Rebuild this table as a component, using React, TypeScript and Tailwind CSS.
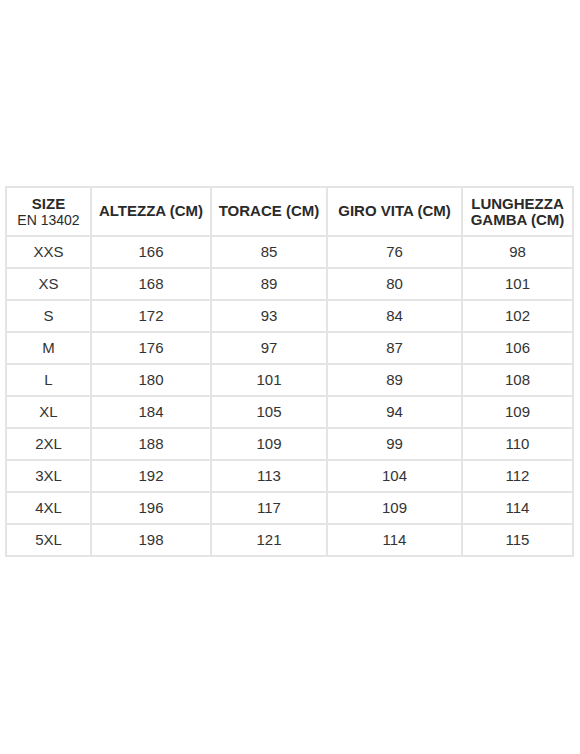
import React from "react";

const rows = [
  ["XXS", "166", "85", "76", "98"],
  ["XS", "168", "89", "80", "101"],
  ["S", "172", "93", "84", "102"],
  ["M", "176", "97", "87", "106"],
  ["L", "180", "101", "89", "108"],
  ["XL", "184", "105", "94", "109"],
  ["2XL", "188", "109", "99", "110"],
  ["3XL", "192", "113", "104", "112"],
  ["4XL", "196", "117", "109", "114"],
  ["5XL", "198", "121", "114", "115"],
];

const App = () => {
  return (
    <div className="min-h-[754px] w-[580px] bg-white pt-[186px] pl-[5px] font-['Liberation_Sans',Arial,sans-serif] text-[#2a2a2a]">
      <table className="table-fixed border-collapse border-2 border-[#e4e4e4] w-[567px]">
        <colgroup>
          <col className="w-[85px]" />
          <col className="w-[120px]" />
          <col className="w-[116px]" />
          <col className="w-[135px]" />
          <col className="w-[111px]" />
        </colgroup>
        <thead>
          <tr className="h-[49px]">
            <th className="border-2 border-[#e4e4e4] text-center leading-[16px]">
              <div className="text-[15px] font-bold">SIZE</div>
              <div className="text-[14px] font-normal">EN 13402</div>
            </th>
            <th className="border-2 border-[#e4e4e4] text-center text-[15px] font-bold">ALTEZZA (CM)</th>
            <th className="border-2 border-[#e4e4e4] text-center text-[15px] font-bold">TORACE (CM)</th>
            <th className="border-2 border-[#e4e4e4] text-center text-[15px] font-bold">GIRO VITA (CM)</th>
            <th className="border-2 border-[#e4e4e4] text-center text-[15px] font-bold leading-[16px]">
              LUNGHEZZA
              <br />
              GAMBA (CM)
            </th>
          </tr>
        </thead>
        <tbody>
          {rows.map((r) => (
            <tr key={r[0]} className="h-[32px]">
              {r.map((c, i) => (
                <td key={i} className="border-2 border-[#e4e4e4] text-center text-[15px] text-[#333]">
                  {c}
                </td>
              ))}
            </tr>
          ))}
        </tbody>
      </table>
    </div>
  );
};

export default App;
